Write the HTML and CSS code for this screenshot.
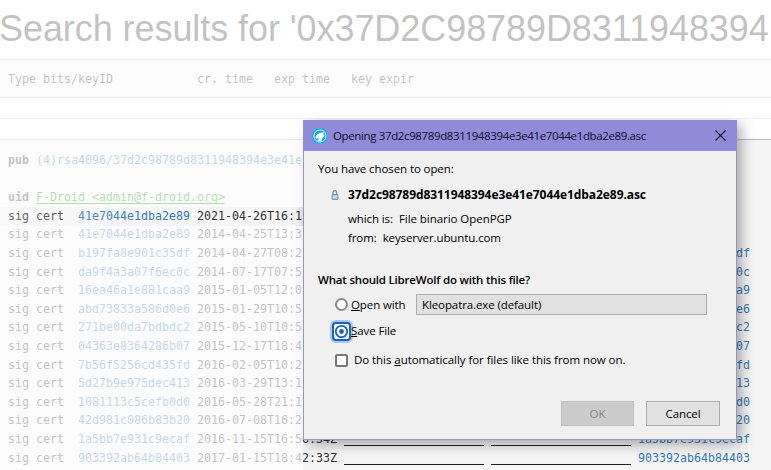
FILE: index.html
```html
<!DOCTYPE html>
<html lang="en">
<head>
<meta charset="utf-8">
<title>Search results</title>
<link rel="stylesheet" href="styles.css">
</head>
<body>
<main class="page">
  <h1>Search results for '0x37D2C98789D8311948394</h1>
  <div class="legend"><span class="c-type">Type bits/keyID</span><span class="c-cr">cr. time</span><span class="c-exp">exp time</span><span>key expir</span></div>
  <div class="rule"></div>
  <div class="keys">
    <div class="row"><b>pub</b><span class="pubid">(4)rsa4096/37d2c98789d8311948394e3e41e</span></div>
    <div class="row"></div>
    <div class="row"><b>uid</b><span class="uid">F-Droid &lt;admin@f-droid.org&gt;</span></div>
    <div class="row sig"><span>sig cert</span><a>41e7044e1dba2e89</a><span>2021-04-26T16:1</span></div>
    <div class="row sig"><span>sig cert</span><a>41e7044e1dba2e89</a><span>2014-04-25T13:3</span></div>
    <div class="row sig"><span>sig cert</span><a>b197fa8e901c35df</a><span>2014-04-27T08:2</span><i></i><i></i><a>b197fa8e901c35df</a></div>
    <div class="row sig"><span>sig cert</span><a>da9f4a3a07f6ec0c</a><span>2014-07-17T07:5</span><i></i><i></i><a>da9f4a3a07f6ec0c</a></div>
    <div class="row sig"><span>sig cert</span><a>16ea46a1e881caa9</a><span>2015-01-05T12:0</span><i></i><i></i><a>16ea46a1e881caa9</a></div>
    <div class="row sig"><span>sig cert</span><a>abd73833a586d0e6</a><span>2015-01-29T10:5</span><i></i><i></i><a>abd73833a586d0e6</a></div>
    <div class="row sig"><span>sig cert</span><a>271be00da7bdbdc2</a><span>2015-05-10T10:5</span><i></i><i></i><a>271be00da7bdbdc2</a></div>
    <div class="row sig"><span>sig cert</span><a>04363e8364286b07</a><span>2015-12-17T18:4</span><i></i><i></i><a>04363e8364286b07</a></div>
    <div class="row sig"><span>sig cert</span><a>7b56f5256cd435fd</a><span>2016-02-05T10:2</span><i></i><i></i><a>7b56f5256cd435fd</a></div>
    <div class="row sig"><span>sig cert</span><a>5d27b9e975dec413</a><span>2016-03-29T13:1</span><i></i><i></i><a>5d27b9e975dec413</a></div>
    <div class="row sig"><span>sig cert</span><a>1081113c5cefb0d0</a><span>2016-05-28T21:1</span><i></i><i></i><a>1081113c5cefb0d0</a></div>
    <div class="row sig"><span>sig cert</span><a>42d981c086b83b20</a><span>2016-07-08T16:2</span><i></i><i></i><a>42d981c086b83b20</a></div>
    <div class="row sig"><span>sig cert</span><a>1a5bb7e931c9ecaf</a><span>2016-11-15T16:56:34Z</span><i></i><i></i><a>1a5bb7e931c9ecaf</a></div>
    <div class="row sig"><span>sig cert</span><a>903392ab64b84403</a><span>2017-01-15T18:42:33Z</span><i></i><i></i><a>903392ab64b84403</a></div>
  </div>
  <div class="shadow"></div>
  <div class="veil veil-top"></div>
  <div class="veil veil-mid"></div>
  <div class="glow"></div>
  <div class="veil veil-low"></div>
</main>
<section class="dialog">
  <header>
    <svg class="logo" width="16" height="16" viewBox="0 0 16 16"><circle cx="8" cy="8" r="7.8" fill="#14a9ea"/><circle cx="8" cy="8" r="6.100" fill="none" stroke="#d9f4ff" stroke-width="1"/><path d="M3.500 9.500C4 6.500 6.500 4.800 12 4.200L11.500 5.500C12.800 7 12.500 8.500 11.200 9.200C9.800 10 9.800 11.500 9.500 13.500L5.500 13L6.800 9.500L4.200 11Z" fill="#fff"/></svg>
    <span class="title">Opening 37d2c98789d8311948394e3e41e7044e1dba2e89.asc</span>
    <svg class="close" width="11" height="11" viewBox="0 0 11 11"><path d="M.5.5l10 10M10.500.5l-10 10" stroke="#16142c" stroke-width="1.150" fill="none"/></svg>
  </header>
  <div class="body">
    <p class="intro">You have chosen to open:</p>
    <div class="file">
      <svg class="lock" width="8" height="10" viewBox="0 0 8 10"><path d="M2 4V2.500a1.800 1.800 0 0 1 3.600 0V5" fill="none" stroke="#6b8ca5" stroke-width="1.200"/><rect x="1" y="4.500" width="6" height="5" rx=".6" fill="#a5cbe2" stroke="#5b8aa9" stroke-width=".8"/><path d="M2.500 7h3" stroke="#e9f8ff"/></svg>
      <b class="fname">37d2c98789d8311948394e3e41e7044e1dba2e89.asc</b>
    </div>
    <div class="meta"><span class="k1">which is:</span><span class="v1">File binario OpenPGP</span></div>
    <div class="meta"><span class="k2">from:</span><span class="v2">keyserver.ubuntu.com</span></div>
    <p class="question">What should LibreWolf do with this file?</p>
    <div class="opt open"><span class="radio"></span><span class="lbl"><u>O</u>pen with</span><span class="select">Kleopatra.exe (default)</span></div>
    <div class="opt save"><span class="radio on"><svg width="15" height="15" viewBox="0 0 15 15"><circle cx="7.500" cy="7.500" r="5.700" fill="#fff" stroke="#1b63bd" stroke-width="1.800"/><circle cx="7.500" cy="7.500" r="2.400" fill="#1b63bd"/></svg></span><span class="lbl"><u>S</u>ave File</span></div>
    <div class="opt auto"><span class="check"></span><span class="lbl">Do this <u>a</u>utomatically for files like this from now on.</span></div>
    <div class="buttons"><span class="btn off">OK</span><span class="btn">Cancel</span></div>
  </div>
</section>
</body>
</html>
```
FILE: styles.css
```css
* { box-sizing: border-box; }
html, body { margin: 0; width: 771px; height: 470px; overflow: hidden; background: #fff; }
body { position: relative; }
.page { height: 470px; overflow: hidden; position: relative; color: #333; }
h1 {
  margin: 9px 0 0 -1px;
  height: 50px;
  font: 400 36px/40px "Liberation Sans", sans-serif;
  letter-spacing: -.07px;
  white-space: nowrap;
}
.legend, .keys {
  font: 11.63px/18.6px "DejaVu Sans Mono", monospace;
  background: #f5f5f5;
  border-top: 1px solid #bbb;
}
.legend { display: flex; height: 39px; padding: 10px 8px; border-bottom: 1px solid #bbb; }
.c-type { width: 189px; }
.c-cr, .c-exp { width: 77px; }
.rule { height: 41px; padding-top: 20px; }
.rule::after { content: ""; display: block; border-top: 1px solid #ccc; }
.keys { height: 331px; padding: 11px 8px 0; }
.row { display: flex; height: 18.6px; white-space: nowrap; }
.row b { width: 28px; }
.row a, .pubid { color: #337ab7; }
.uid { color: #0a8a0a; text-decoration: underline; text-underline-offset: 2px; }
.sig > * { flex: none; }
.sig > :nth-child(1) { width: 70px; }
.sig > :nth-child(2) { width: 119px; }
.sig > :nth-child(3) { width: 147px; }
.sig i { width: 140px; margin-right: 7px; height: 16px; border-bottom: 1px solid #222; }

.shadow { position: absolute; left: 304px; top: 121px; width: 433px; height: 319px; box-shadow: 3px 3px 14px rgba(0,0,0,.38); }
.veil { position: absolute; left: 0; background: rgba(255,255,255,.7); }
.veil-top { top: 0; width: 771px; height: 119px; }
.veil-mid { top: 119px; width: 303px; height: 88px; }
.glow { position: absolute; left: 0; top: 207px; width: 303px; height: 19px; background: linear-gradient(90deg, rgba(255,255,255,.3), rgba(255,255,255,0) 50%); }
.veil-low { top: 226px; width: 303px; height: 244px; }

.dialog {
  position: absolute;
  left: 303px;
  top: 120px;
  width: 434px;
  height: 320px;
  background: #f0f0f0;
  border: 1px solid #9594c6;
  border-top: 0;
  font: 11.5px/16px "Open Sans", sans-serif;
  letter-spacing: -.1px;
  color: #000;
  white-space: nowrap;
}
.dialog header { display: flex; align-items: center; height: 31px; margin: 0 -1px; padding: 0 11px 0 9px; background: #8f8bd8; }
.title { margin-left: 5px; letter-spacing: -.37px; color: #0e0c28; }
.close { margin-left: auto; }
.body { padding: 10px 16px 0 14px; }
p { margin: 0; }
.file { display: flex; align-items: center; height: 16px; margin: 10px 0 0 13px; }
.fname { margin-left: 9px; font-size: 12px; letter-spacing: -.07px; }
.meta { display: flex; height: 19px; margin-left: 30px; }
.file + .meta { margin-top: 8px; }
.v1, .v2 { margin-left: 6px; }
.v1 { letter-spacing: -.05px; }
.question { margin-top: 23px; font-weight: 600; letter-spacing: -.2px; }
.opt { display: flex; align-items: center; margin-left: 17px; }
.opt u { text-underline-offset: 1px; }
.open { height: 21px; margin-top: 6px; }
.radio { width: 13px; height: 13px; border: 2px solid #8b8b8b; border-radius: 50%; background: #fff; flex: none; }
.open .lbl { width: 65px; margin-left: 3px; }
.select { width: 291px; height: 21px; border: 1px solid #adadad; background: #e1e1e1; padding-left: 5px; line-height: 19px; }
.save { height: 20px; margin: 6px 0 0 14px; }
.radio.on { display: flex; align-items: center; justify-content: center; width: 19px; height: 19px; border: 2px solid #1b63bd; border-radius: 4px; box-shadow: 0 0 0 2px #a9c8ed; }
.radio.on svg { flex: none; }
.save .lbl { margin-left: 0; }
.auto { height: 16px; margin-top: 11px; }
.check { width: 13px; height: 13px; border: 2px solid #777; border-radius: 2px; background: #fff; }
.auto .lbl { margin-left: 6px; letter-spacing: -.06px; }
.buttons { display: flex; justify-content: flex-end; gap: 12px; margin-top: 33px; }
.btn { width: 74px; height: 25px; border: 1px solid #adadad; background: #e1e1e1; text-align: center; line-height: 23px; }
.btn.off { width: 73px; background: #ccc; border-color: #bfbfbf; color: #838383; }
```
